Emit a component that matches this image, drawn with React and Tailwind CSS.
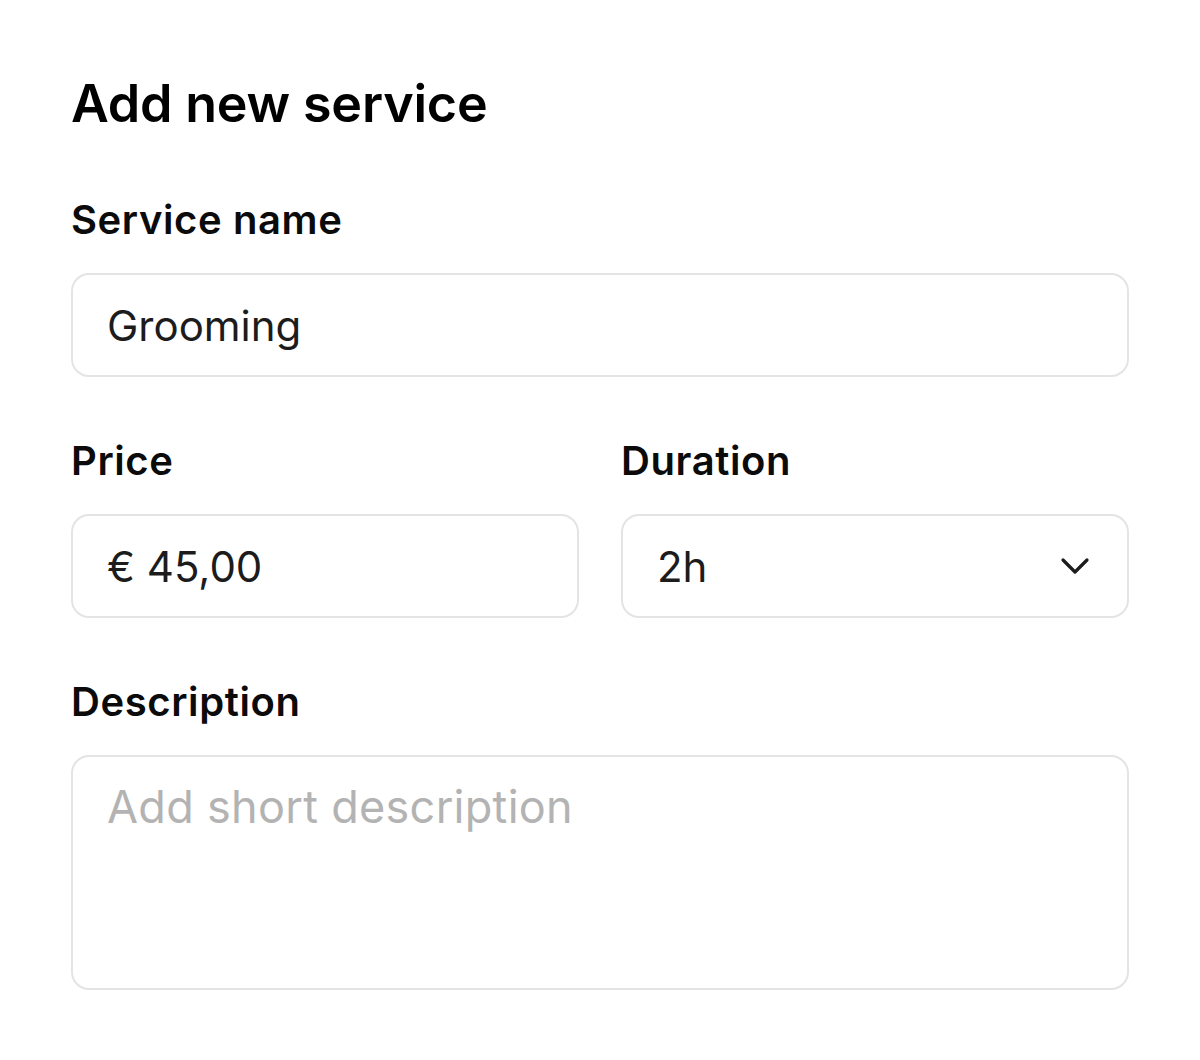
import { ChevronDown } from 'lucide-react'

const font = { fontFamily: 'Inter, "Noto Sans", sans-serif' }

function Label({ children }) {
  return (
    <label className="block text-[40px] leading-[44px] font-semibold tracking-[0.6px] text-[#0b0b0b] mb-[31px]">
      {children}
    </label>
  )
}

function Field({ children, className = '' }) {
  return (
    <div
      className={`h-[104px] flex items-center border-2 border-[#e4e4e4] rounded-[18px] pl-[34px] pt-[2px] text-[42px] leading-none text-[#1c1c1c] ${className}`}
    >
      {children}
    </div>
  )
}

export default function App() {
  return (
    <div className="min-h-[1060px] bg-white px-[71px] pt-[76px]" style={font}>
      <h1 className="text-[52px] leading-[56px] font-semibold text-black tracking-[-0.2px] mb-[66px]">
        Add new service
      </h1>

      <Label>Service name</Label>
      <Field className="pr-[34px]">Grooming</Field>

      <div className="grid grid-cols-2 gap-[42px] mt-[62px]">
        <div>
          <Label>Price</Label>
          <Field className="pr-[34px]">€ 45,00</Field>
        </div>
        <div>
          <Label>Duration</Label>
          <Field className="justify-between pr-[28px]">
            <span>2h</span>
            <ChevronDown size={48} strokeWidth={1.6} className="text-[#1c1c1c] -mt-[2px]" />
          </Field>
        </div>
      </div>

      <div className="mt-[62px]">
        <Label>Description</Label>
        <div className="h-[235px] border-2 border-[#e4e4e4] rounded-[18px] px-[34px] pt-[25px] text-[45px] leading-[50px] tracking-[0.3px] text-[#b3b3b3]">
          Add short description
        </div>
      </div>
    </div>
  )
}
